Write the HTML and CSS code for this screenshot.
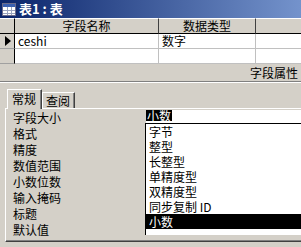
FILE: index.html
```html
<!DOCTYPE html>
<html lang="zh-CN">
<head>
  <meta charset="UTF-8">
  <title>表1 : 表</title>
  <link rel="stylesheet" href="styles.css">
</head>
<body>

<div class="window">
  <div class="titlebar">
    <svg class="title-icon" width="14" height="13" viewBox="0 0 14 13">
      <rect x="0.5" y="0.5" width="13" height="12" fill="#ffffff" stroke="#6b6b8a"/>
      <rect x="1" y="1" width="12" height="3" fill="#3a5fb0"/>
      <path d="M1 7.5H13M1 10.5H13M5.5 4V12M9.5 4V12" stroke="#9aa4c0" stroke-width="1"/>
    </svg>
    <span class="title">表1 : 表</span>
  </div>

  <div class="grid">
    <div class="hd sel"></div>
    <div class="hd">字段名称</div>
    <div class="hd">数据类型</div>
    <div class="hd last"></div>

    <div class="sel"><span class="arrow"></span></div>
    <div class="cell">ceshi</div>
    <div class="cell">数字</div>
    <div class="cell last"></div>

    <div class="sel"></div>
    <div class="cell"></div>
    <div class="cell"></div>
    <div class="cell last"></div>
  </div>

  <div class="caption">字段属性</div>

  <div class="props">
    <div class="tabs">
      <div class="tab active">常规</div>
      <div class="tab">查阅</div>
    </div>
    <div class="panel">
      <div class="labels">
        <div>字段大小</div>
        <div>格式</div>
        <div>精度</div>
        <div>数值范围</div>
        <div>小数位数</div>
        <div>输入掩码</div>
        <div>标题</div>
        <div>默认值</div>
      </div>
      <div class="values">
        <div class="field"><span class="picked">小数</span></div>
        <ul class="dropdown">
          <li>字节</li>
          <li>整型</li>
          <li>长整型</li>
          <li>单精度型</li>
          <li>双精度型</li>
          <li>同步复制 ID</li>
          <li class="on">小数</li>
        </ul>
      </div>
    </div>
  </div>
</div>

</body>
</html>
```

FILE: styles.css
```css
* {
  box-sizing: border-box;
}

body {
  margin: 0;
  padding: 0;
  background: #d4d0c8;
  font-family: "Noto Sans CJK SC", sans-serif;
  font-size: 12px;
  color: #000;
}

.window {
  width: 301px;
  height: 247px;
  overflow: hidden;
}

.titlebar {
  height: 18px;
  display: flex;
  align-items: center;
  padding-left: 2px;
  background: linear-gradient(to right, #0a246a, #7493cc);
}

.title-icon {
  display: block;
  margin-right: 3px;
}

.title {
  color: #fff;
  font-weight: bold;
  font-size: 13px;
  line-height: 18px;
}

/* tabla de campos */
.grid {
  display: grid;
  grid-template-columns: 15px 144px 97px 1fr;
  grid-template-rows: 16px 15px 15px;
}

.hd {
  background: #d4d0c8;
  border-top: 1px solid #fff;
  border-bottom: 1px solid #000;
  border-right: 1px solid #404040;
  text-align: center;
  line-height: 14px;
}

.hd.last {
  border-right: none;
}

.sel {
  background: #d4d0c8;
  border-right: 1px solid #000;
  border-bottom: 1px solid #a0a0a0;
  display: flex;
  align-items: center;
  padding-left: 5px;
}

.hd.sel {
  border-right: 1px solid #000;
  border-bottom: 1px solid #000;
  padding: 0;
}

.arrow {
  width: 0;
  height: 0;
  border-left: 6px solid #000;
  border-top: 5px solid transparent;
  border-bottom: 5px solid transparent;
}

.cell {
  background: #fff;
  border-right: 1px solid #c0c0c0;
  border-bottom: 1px solid #c0c0c0;
  padding-left: 3px;
  line-height: 14px;
}

.cell.last {
  border-right: none;
}

.caption {
  height: 18px;
  text-align: right;
  padding-right: 3px;
  line-height: 18px;
  border-bottom: 1px solid #808080;
}

/* propiedades */
.props {
  border-top: 1px solid #fff;
  padding-left: 5px;
}

.tabs {
  height: 25px;
  display: flex;
  align-items: flex-end;
  padding-left: 2px;
}

.tab {
  height: 16px;
  line-height: 15px;
  padding: 0 4px 0 3px;
  border-top: 1px solid #fff;
  border-left: 1px solid #fff;
  border-right: 1px solid #404040;
  box-shadow: inset -1px 0 #808080;
}

.tab.active {
  height: 20px;
  line-height: 17px;
  padding: 0 5px 0 4px;
  margin-bottom: -1px;
  background: #d4d0c8;
  position: relative;
  z-index: 1;
}

.panel {
  height: 134px;
  display: flex;
  border-top: 1px solid #fff;
  border-left: 1px solid #fff;
  border-bottom: 1px solid #404040;
  box-shadow: inset 0 -1px #808080;
  padding-top: 1px;
}

.labels {
  width: 140px;
  padding-left: 7px;
  line-height: 16px;
}

.values {
  flex: 1;
  position: relative;
}

.field {
  height: 13px;
  background: #fff;
  line-height: 12px;
}

.picked {
  display: inline-block;
  background: #000;
  color: #fff;
  padding: 0 1px;
  height: 11px;
  line-height: 11px;
}

.dropdown {
  position: absolute;
  top: 13px;
  left: -1px;
  right: -2px;
  height: 112px;
  margin: 0;
  padding: 0;
  list-style: none;
  background: #fff;
  border: 1px solid #000;
  border-bottom: none;
}

.dropdown li {
  height: 15px;
  line-height: 15px;
  padding-left: 3px;
}

.dropdown li.on {
  background: #000;
  color: #fff;
}
```
